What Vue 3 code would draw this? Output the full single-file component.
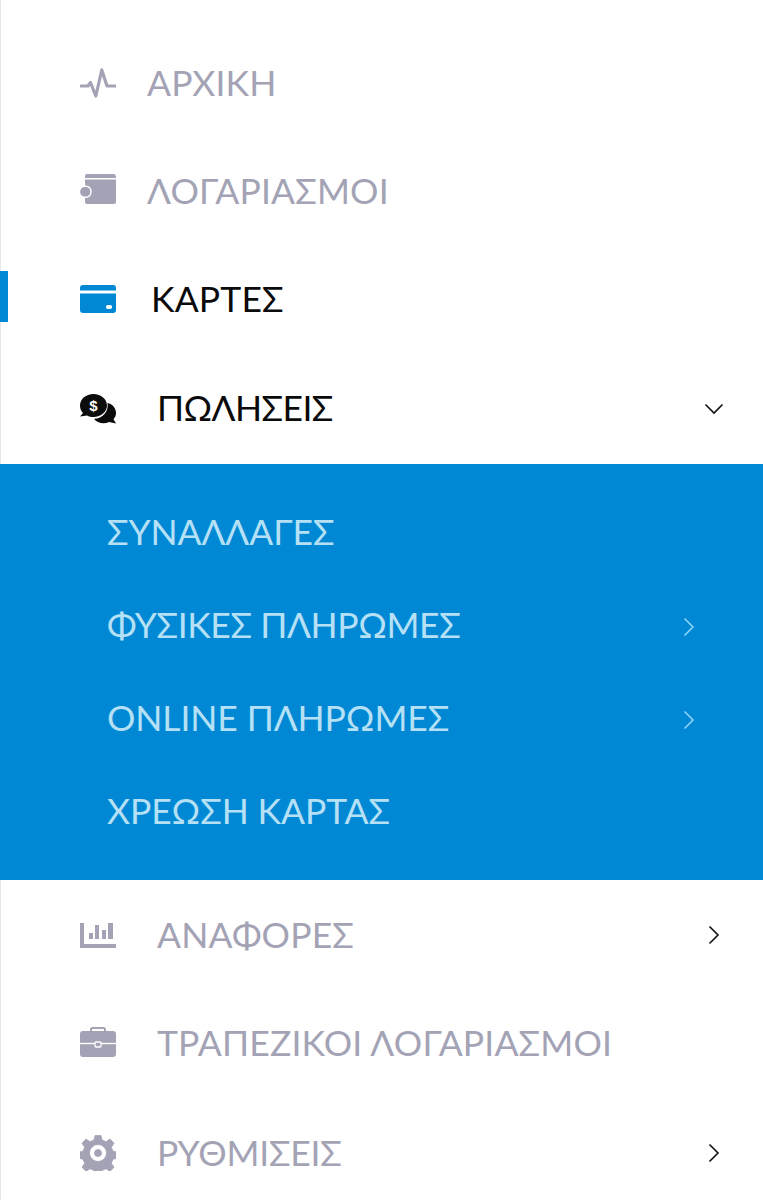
<script setup>
const top = [
  { label: 'ΑΡΧΙΚΗ', icon: 'pulse', cls: 'muted' },
  { label: 'ΛΟΓΑΡΙΑΣΜΟΙ', icon: 'wallet', cls: 'muted' },
  { label: 'ΚΑΡΤΕΣ', icon: 'card', cls: 'active' },
]
const subs = [
  { label: 'ΣΥΝΑΛΛΑΓΕΣ' },
  { label: 'ΦΥΣΙΚΕΣ ΠΛΗΡΩΜΕΣ', more: true, tight: true },
  { label: 'ONLINE ΠΛΗΡΩΜΕΣ', more: true },
  { label: 'ΧΡΕΩΣΗ ΚΑΡΤΑΣ' },
]
</script>

<template>
  <div class="page">
    <nav class="nav">
      <div v-for="item in top" :key="item.label" class="row" :class="item.cls">
        <span v-if="item.cls === 'active'" class="marker"></span>
        <svg v-if="item.icon === 'pulse'" class="ico" viewBox="0 0 36 30">
          <path d="M1 18H8L10.500 14.500L15.800 28L21.800 2L27 18H35" fill="none" stroke="#a3a3b5" stroke-width="3.200" stroke-linecap="round" stroke-linejoin="round"/>
        </svg>
        <svg v-else-if="item.icon === 'wallet'" class="ico" viewBox="0 0 36 36">
          <path d="M5 3a2 2 0 0 1 2-2h26a3 3 0 0 1 3 3v1H5z" fill="#a3a3b5"/>
          <path d="M5 6.500h31V29a2 2 0 0 1-2 2H7a2 2 0 0 1-2-2z" fill="#a3a3b5"/>
          <rect x="-0.500" y="13.300" width="11.500" height="11" rx="5" fill="#a3a3b5" stroke="#fff" stroke-width="1.400"/>
        </svg>
        <svg v-else class="ico" viewBox="0 0 36 30">
          <path d="M0 4a3 3 0 0 1 3-3h30a3 3 0 0 1 3 3v2.500H0zM0 9.500h36V26a3 3 0 0 1-3 3H3a3 3 0 0 1-3-3z" fill="#0088d4"/>
          <rect x="26" y="21" width="6" height="4" rx="1.800" fill="#fff"/>
        </svg>
        <span class="label" :class="{ shift: item.cls === 'active' }">{{ item.label }}</span>
      </div>

      <div class="row open wide">
        <svg class="ico" viewBox="0 0 36 30">
          <path d="M13.500 0C6 0 0 5 0 11.500c0 3 1.200 5.500 3 7.500L0 22.500l7-1c2 1 4.300 1.500 6.500 1.500C21 23 27 17.800 27 11.500S21 0 13.500 0z" fill="#0c0c0c"/>
          <path d="M27.500 9c5 1 8.500 5 8.500 10 0 2.500-1 4.500-2.500 6.200L36 29.500l-7-1.500c-1.800.8-3.500 1.200-5.500 1.200-4 0-7.500-1.700-9.500-4.500 8.500 0 15-7 13.500-15.700z" fill="#0c0c0c"/>
          <text x="13.500" y="17" text-anchor="middle" font-size="15" font-weight="700" font-family="Liberation Sans, sans-serif" fill="#fff">$</text>
        </svg>
        <span class="label far narrow">ΠΩΛΗΣΕΙΣ</span>
        <svg class="chev" viewBox="0 0 20 12"><path d="M1.500 1.500L10 10L18.500 1.500" fill="none" stroke="#111" stroke-width="1.600"/></svg>
      </div>

      <div class="sub">
        <div v-for="s in subs" :key="s.label" class="sub-row">
          <span class="sub-label" :class="{ tight: s.tight }">{{ s.label }}</span>
          <svg v-if="s.more" class="sub-chev" viewBox="0 0 12 20"><path d="M1.500 1.500L10 10L1.500 18.500" fill="none" stroke="#8fd6f7" stroke-width="1.500"/></svg>
        </div>
      </div>

      <div class="row muted after">
        <svg class="ico" viewBox="0 0 36 30">
          <path d="M2 3V26H36" fill="none" stroke="#a3a3b5" stroke-width="4"/>
          <rect x="9" y="13" width="4" height="6" fill="#a3a3b5"/>
          <rect x="15" y="5" width="4" height="14" fill="#a3a3b5"/>
          <rect x="22" y="10" width="4" height="9" fill="#a3a3b5"/>
          <rect x="28" y="3" width="5" height="16" fill="#a3a3b5"/>
        </svg>
        <span class="label far">ΑΝΑΦΟΡΕΣ</span>
        <svg class="side-chev" viewBox="0 0 12 20"><path d="M1.500 1.500L10 10L1.500 18.500" fill="none" stroke="#111" stroke-width="1.600"/></svg>
      </div>

      <div class="row muted">
        <svg class="ico" viewBox="0 0 36 32">
          <path d="M11 5V2.500a1.500 1.500 0 0 1 1.500-1.500h11a1.500 1.500 0 0 1 1.500 1.500V5" fill="none" stroke="#a3a3b5" stroke-width="2"/>
          <rect x="0" y="4" width="36" height="26" rx="3" fill="#a3a3b5"/>
          <rect x="0" y="15.800" width="36" height="1.400" fill="#fff"/>
          <rect x="15" y="15" width="6" height="5" rx="1" fill="#a3a3b5" stroke="#fff" stroke-width="1.300"/>
        </svg>
        <span class="label far">ΤΡΑΠΕΖΙΚΟΙ ΛΟΓΑΡΙΑΣΜΟΙ</span>
      </div>

      <div class="row muted last">
        <svg class="ico" viewBox="0 0 36 36">
          <path fill-rule="evenodd" d="M15 0.500h6l1 4.500 4 1.700 4-2.700 4 4.200-2.700 4 1.700 4 4.500 1v6l-4.500 1-1.700 4 2.700 4-4 4.200-4-2.700-4 1.700-1 4.500h-6l-1-4.500-4-1.700-4 2.700-4-4.200 2.700-4-1.700-4-4.500-1v-6l4.500-1 1.700-4-2.700-4 4-4.200 4 2.700 4-1.700zM18 9.500a8.500 8.500 0 1 0 0 17 8.500 8.500 0 0 0 0-17zM18 14.500a3.500 3.500 0 1 1 0 7 3.500 3.500 0 0 1 0-7z" fill="#a3a3b5" stroke="#a3a3b5" stroke-width="0.800" stroke-linejoin="round"/>
        </svg>
        <span class="label far slim">ΡΥΘΜΙΣΕΙΣ</span>
        <svg class="side-chev" viewBox="0 0 12 20"><path d="M1.500 1.500L10 10L1.500 18.500" fill="none" stroke="#111" stroke-width="1.600"/></svg>
      </div>
    </nav>
  </div>
</template>

<style scoped>
.page {
  width: 763px;
  height: 1200px;
  overflow: hidden;
  background: linear-gradient(#e6e6ec, #e6e6ec) left top / 1px 100% no-repeat #fff;
  font-family: "Lato", "Noto Sans", sans-serif;
}
.nav {
  padding-top: 29px;
  display: flex;
  flex-direction: column;
}
.row {
  position: relative;
  height: 108px;
  flex: none;
  display: flex;
  align-items: center;
  padding-left: 80px;
  padding-right: 39px;
  font-size: 35.5px;
  letter-spacing: 0.15px;
  color: #0a0a0a;
}
.wide { height: 111px; }
.after { margin-top: 1px; }
.last { margin-top: 2px; }
.muted { color: #a3a3b5; }
.marker {
  position: absolute;
  left: 0;
  top: 26px;
  width: 8px;
  height: 51px;
  background: #0088d4;
}
.ico { width: 36px; height: 36px; flex: none; }
.label { margin-left: 31px; white-space: nowrap; padding-bottom: 2px; }
.label.shift { margin-left: 35px; }
.label.far { margin-left: 41px; }
.label.narrow { letter-spacing: -0.6px; }
.label.slim { letter-spacing: -0.2px; }
.chev { width: 20px; height: 12px; margin-left: auto; }
.side-chev { width: 12px; height: 20px; margin-left: auto; margin-right: 4px; }
.sub {
  height: 416px;
  flex: none;
  box-sizing: border-box;
  padding: 22px 68px 21px 107px;
  background: #0088d4;
  color: #b5e0f5;
  font-size: 35.5px;
  letter-spacing: -0.1px;
}
.sub-row {
  height: 93px;
  display: flex;
  align-items: center;
  justify-content: space-between;
}
.sub-label { padding-bottom: 2px; }
.sub-label.tight { letter-spacing: -0.4px; }
.sub-chev { width: 12px; height: 20px; margin-top: 2px; }
</style>
